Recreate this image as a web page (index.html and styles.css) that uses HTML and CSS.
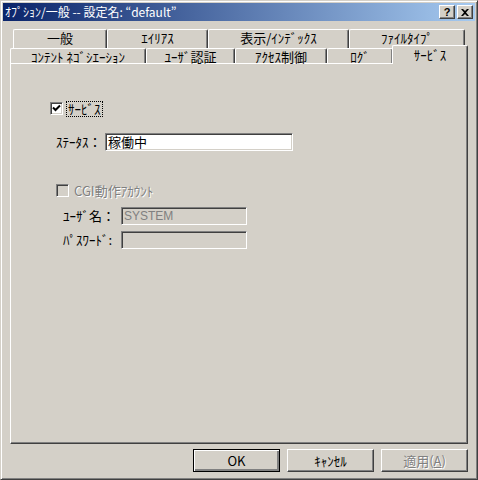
FILE: index.html
```html
<!DOCTYPE html>
<html lang="ja">
<head>
  <meta charset="UTF-8">
  <title>ｵﾌﾟｼｮﾝ/一般 -- 設定名: “default”</title>
  <link rel="stylesheet" href="styles.css">
</head>
<body>
  <div class="window">
    <div class="titlebar">
      <span class="title">ｵﾌﾟｼｮﾝ/一般 -- 設定名: “default”</span>
      <div class="caption-btns">
        <div class="cap-btn help">?</div>
        <div class="cap-btn close">
          <svg width="8" height="7" viewBox="0 0 8 7">
            <path d="M0 0 L2 0 L4 2 L6 0 L8 0 L5 3.5 L8 7 L6 7 L4 5 L2 7 L0 7 L3 3.5 Z" fill="#000"/>
          </svg>
        </div>
      </div>
    </div>

    <div class="content">
      <div class="tabs">
        <div class="tabrow back">
          <div class="tab w94">一般</div>
          <div class="tab w101">ｴｲﾘｱｽ</div>
          <div class="tab w141">表示/ｲﾝﾃﾞｯｸｽ</div>
          <div class="tab w116">ﾌｧｲﾙﾀｲﾌﾟ</div>
        </div>
        <div class="tabrow front">
          <div class="tab w136">ｺﾝﾃﾝﾄ ﾈｺﾞｼｴｰｼｮﾝ</div>
          <div class="tab w89">ﾕｰｻﾞ認証</div>
          <div class="tab w92">ｱｸｾｽ制御</div>
          <div class="tab w66">ﾛｸﾞ</div>
          <div class="tab selected">ｻｰﾋﾞｽ</div>
        </div>
      </div>

      <div class="panel">
        <div class="check-row">
          <span class="checkbox">
            <svg width="9" height="9" viewBox="0 0 9 9">
              <polyline points="1,3.5 3.5,6 8,1.5" fill="none" stroke="#000" stroke-width="2"/>
            </svg>
          </span>
          <span class="check-label focused">ｻｰﾋﾞｽ</span>
        </div>

        <div class="field-row status">
          <span class="field-label">ｽﾃｰﾀｽ：</span>
          <span class="textbox wide">稼働中</span>
        </div>

        <div class="check-row cgi disabled">
          <span class="checkbox off"></span>
          <span class="check-label">CGI動作ｱｶｳﾝﾄ</span>
        </div>

        <div class="field-row account">
          <span class="field-label">ﾕｰｻﾞ名：</span>
          <span class="textbox narrow off">SYSTEM</span>
        </div>
        <div class="field-row account pass">
          <span class="field-label">ﾊﾟｽﾜｰﾄﾞ:</span>
          <span class="textbox narrow off"></span>
        </div>
      </div>

      <div class="buttons">
        <div class="btn default">OK</div>
        <div class="btn">ｷｬﾝｾﾙ</div>
        <div class="btn off">適用(<u>A</u>)</div>
      </div>
    </div>
  </div>
</body>
</html>
```

FILE: styles.css
```css
:root {
  --face: #d4d0c8;
  --light: #ffffff;
  --shadow: #808080;
  --dark: #404040;
  --font: "Noto Sans CJK JP", "DejaVu Sans", sans-serif;
}

* {
  box-sizing: border-box;
}

body {
  margin: 0;
  background: var(--face);
  font-family: var(--font);
  font-size: 13px;
  color: #000;
}

.window {
  width: 478px;
  height: 480px;
  padding: 2px;
  background: var(--face);
  border: 1px solid;
  border-color: var(--face) var(--dark) var(--dark) var(--face);
  box-shadow: inset 1px 1px var(--light), inset -1px -1px var(--shadow);
}

/* title bar */

.titlebar {
  height: 18px;
  display: flex;
  align-items: center;
  justify-content: space-between;
  padding: 0 2px 0 2px;
  background: linear-gradient(to right, #0a246a, #a6caf0);
}

.title {
  color: #fff;
  font-size: 12px;
  line-height: 18px;
  white-space: nowrap;
}

.caption-btns {
  display: flex;
  gap: 2px;
}

.cap-btn {
  width: 16px;
  height: 14px;
  display: flex;
  align-items: center;
  justify-content: center;
  background: var(--face);
  border: 1px solid;
  border-color: var(--light) var(--dark) var(--dark) var(--light);
  box-shadow: inset -1px -1px var(--shadow);
  font-family: "Liberation Sans", sans-serif;
  font-weight: bold;
  font-size: 11px;
  line-height: 1;
}

/* tabs */

.content {
  padding: 8px 7px 0 7px;
}

.tabs {
  height: 34px;
}

.tabrow {
  display: flex;
}

.tabrow.back {
  height: 19px;
  margin-left: 3px;
}

.tabrow.front {
  height: 15px;
}

.tab {
  height: 100%;
  display: flex;
  align-items: center;
  justify-content: center;
  background: var(--face);
  border-top: 1px solid var(--light);
  border-left: 1px solid var(--light);
  border-right: 1px solid var(--dark);
  border-radius: 2px 2px 0 0;
  box-shadow: inset -1px 0 var(--shadow);
  white-space: nowrap;
  line-height: 1;
  padding-top: 1px;
}

.back .tab {
  padding-top: 0;
  padding-bottom: 4px;
}

.w94 { width: 94px; }
.w101 { width: 101px; }
.w141 { width: 141px; }
.w116 { width: 116px; }
.w136 { width: 136px; }
.w89 { width: 89px; }
.w92 { width: 92px; }
.w66 { width: 66px; }

.tab.selected {
  position: relative;
  z-index: 1;
  width: 76px;
  height: 19px;
  margin-top: -3px;
  margin-left: -1px;
  padding-top: 0;
  padding-bottom: 2px;
}

/* panel */

.panel {
  height: 381px;
  border: 1px solid;
  border-color: var(--light) var(--dark) var(--dark) var(--light);
  box-shadow: inset -1px -1px var(--shadow);
  padding: 38px 0 0 39px;
}

.check-row {
  display: flex;
  align-items: center;
  height: 13px;
}

.checkbox {
  width: 13px;
  height: 13px;
  flex: none;
  display: flex;
  align-items: center;
  justify-content: center;
  background: #fff;
  border: 1px solid;
  border-color: var(--shadow) var(--light) var(--light) var(--shadow);
  box-shadow: inset 1px 1px var(--dark), inset -1px -1px var(--face);
}

.checkbox.off {
  background: var(--face);
}

.check-label {
  margin-left: 3px;
  padding: 0 1px;
  line-height: 14px;
  border: 1px solid transparent;
}

.check-label.focused {
  border: 1px dotted #000;
}

.disabled .check-label,
.off {
  color: var(--shadow);
}

.disabled .check-label {
  text-shadow: 1px 1px var(--light);
}

.field-row {
  display: flex;
  align-items: center;
}

.field-row.status {
  margin: 17px 0 0 6px;
}

.field-label {
  white-space: nowrap;
}

.status .field-label {
  width: 49px;
}

.textbox {
  height: 18px;
  padding: 0 2px;
  display: flex;
  align-items: center;
  background: #fff;
  border: 1px solid;
  border-color: var(--shadow) var(--light) var(--light) var(--shadow);
  box-shadow: inset 1px 1px var(--dark), inset -1px -1px var(--face);
  font-size: 13px;
}

.textbox.wide {
  width: 188px;
}

.textbox.narrow {
  width: 126px;
  height: 18px;
}

.textbox.off {
  background: var(--face);
  font-family: "Liberation Sans", sans-serif;
  font-size: 12px;
}

.check-row.cgi {
  margin: 33px 0 0 6px;
}

.field-row.account {
  margin: 9px 0 0 13px;
}

.field-row.pass {
  margin-top: 5px;
}

.account .field-label {
  width: 58px;
}

/* dialog buttons */

.buttons {
  display: flex;
  justify-content: flex-end;
  gap: 7px;
  margin-top: 5px;
}

.btn {
  width: 87px;
  height: 23px;
  display: flex;
  align-items: center;
  justify-content: center;
  background: var(--face);
  border: 1px solid;
  border-color: var(--light) var(--dark) var(--dark) var(--light);
  box-shadow: inset -1px -1px var(--shadow);
}

.btn.default {
  border: 1px solid #000;
  box-shadow: inset 1px 1px var(--light), inset -2px -2px var(--shadow);
}

.btn.off {
  text-shadow: 1px 1px var(--light);
}
```
